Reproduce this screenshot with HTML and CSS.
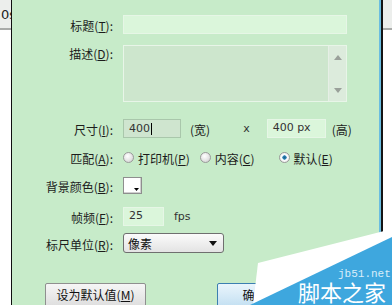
FILE: index.html
```html
<!DOCTYPE html>
<html>
<head>
<meta charset="utf-8">
<link rel="stylesheet" href="styles.css">
</head>
<body>
<div class="screen">
  <div class="side side-left"><div class="tab">0s</div></div>
  <div class="edge edge-dark"></div>
  <div class="dialog">
    <div class="row r1">
      <div class="lbl">标题(<u>T</u>):</div>
      <div class="field field-title"></div>
    </div>
    <div class="row r2">
      <div class="lbl lbl-top">描述(<u>D</u>):</div>
      <div class="area">
        <div class="scroll">
          <svg width="8" height="5" viewBox="0 0 8 5"><path d="M0 5 L4 0 L8 5 Z" fill="#9aa09a"/></svg>
          <svg width="8" height="5" viewBox="0 0 8 5"><path d="M0 0 L4 5 L8 0 Z" fill="#9aa09a"/></svg>
        </div>
      </div>
    </div>
    <div class="row r3">
      <div class="lbl">尺寸(<u>I</u>):</div>
      <div class="field field-w"><span>400</span><span class="caret"></span></div>
      <span class="unit unit-w">(宽)</span>
      <span class="times">x</span>
      <div class="field field-h">400 px</div>
      <span class="unit unit-h">(高)</span>
    </div>
    <div class="row r4">
      <div class="lbl">匹配(<u>A</u>):</div>
      <span class="radio"></span><span class="opt opt-p">打印机(<u>P</u>)</span>
      <span class="radio"></span><span class="opt opt-c">内容(<u>C</u>)</span>
      <span class="radio radio-on"></span><span class="opt">默认(<u>E</u>)</span>
    </div>
    <div class="row r5">
      <div class="lbl">背景颜色(<u>B</u>):</div>
      <div class="swatch">
        <svg class="swatch-arrow" width="5" height="3" viewBox="0 0 5 3"><path d="M0 0 L5 0 L2.5 3 Z" fill="#000"/></svg>
      </div>
    </div>
    <div class="row r6">
      <div class="lbl">帧频(<u>F</u>):</div>
      <div class="field field-fps">25</div>
      <span class="fps">fps</span>
    </div>
    <div class="row r7">
      <div class="lbl">标尺单位(<u>R</u>):</div>
      <div class="select">
        <span>像素</span>
        <svg width="8" height="5" viewBox="0 0 8 5"><path d="M0 0 L8 0 L4 5 Z" fill="#111"/></svg>
      </div>
    </div>
    <div class="buttons">
      <div class="btn btn-default">设为默认值(<u>M</u>)</div>
      <div class="btn btn-ok">确定</div>
    </div>
  </div>
  <div class="edge edge-blue"></div>
  <div class="edge edge-black"></div>
  <div class="side side-right"><div class="tab"></div></div>
  <svg class="wm" width="392" height="305" viewBox="0 0 392 305">
    <polygon points="392,229 258,263 253,305 392,305" fill="#ffffff"/>
    <polygon points="392,237 250,305 392,305" fill="#3ea7de"/>
    <text x="338" y="277" class="wm-url">jb51.net</text>
    <text x="298" y="301" class="wm-name">脚本之家</text>
  </svg>
</div>
</body>
</html>
```

FILE: styles.css
```css
* { box-sizing: border-box; }
html, body { margin: 0; padding: 0; }
body {
  width: 392px;
  height: 305px;
  overflow: hidden;
  font-family: "Noto Sans CJK SC", "DejaVu Sans", sans-serif;
  font-size: 12px;
  color: #1c1c1c;
}
u { text-decoration: underline; text-underline-offset: 1px; }

.screen {
  position: relative;
  display: flex;
  width: 392px;
  height: 305px;
  overflow: hidden;
}

.side {
  background: #ffffff;
  height: 305px;
}
.side-left { width: 11px; }
.side-right { width: 9px; }
.tab {
  height: 30px;
  background: #eceeec;
  border-bottom: 2px solid #a9aba9;
  font-family: "DejaVu Sans", sans-serif;
  font-size: 13px;
  line-height: 30px;
  color: #222;
  overflow: hidden;
  white-space: nowrap;
}
.side-left .tab { padding-left: 1px; }

.edge { height: 305px; }
.edge-dark { width: 1px; background: #101010; }
.edge-blue { width: 2px; background: #6bbde0; }
.edge-black { width: 2px; background: #141414; }

.dialog {
  width: 367px;
  background: #c7ebc9;
  padding-top: 15px;
  display: flex;
  flex-direction: column;
}

.row {
  display: flex;
  align-items: center;
  height: 19px;
}
.r2 { height: 57px; margin-top: 11px; align-items: flex-start; }
.r3 { margin-top: 17px; }
.r4 { margin-top: 10px; }
.r5 { margin-top: 9px; }
.r6 { margin-top: 12px; }
.r7 { margin-top: 7px; height: 20px; }

.lbl {
  width: 101px;
  margin-right: 10px;
  text-align: right;
  white-space: nowrap;
  line-height: 19px;
  padding-top: 2px;
}
.lbl-top { line-height: 16px; padding-top: 1px; }

.field {
  height: 19px;
  border: 1px solid #e6f6e6;
  background: #dbf6db;
  padding-left: 5px;
  line-height: 16px;
  font-family: "DejaVu Sans", sans-serif;
  font-size: 11px;
  color: #333;
}
.field-title { width: 224px; }
.field-w {
  width: 58px;
  background: #cfe5cf;
  border-color: #a9c7ab;
  display: flex;
  align-items: center;
}
.caret {
  display: inline-block;
  width: 1px;
  height: 12px;
  background: #000;
  margin-left: 1px;
}
.field-h { width: 59px; }
.field-fps { width: 41px; }

.unit { white-space: nowrap; padding-top: 1px; }
.unit-w { margin-left: 9px; }
.times {
  margin-left: 33px;
  font-family: "DejaVu Sans", sans-serif;
  font-size: 11px;
  color: #333;
}
.field-h { margin-left: 17px; }
.unit-h { margin-left: 6px; }

.area {
  width: 224px;
  height: 57px;
  border: 1px solid #e8f5e8;
  background: #cde6cd;
  display: flex;
  justify-content: flex-end;
}
.scroll {
  width: 18px;
  height: 100%;
  background: #dcebdc;
  border-left: 1px solid #e6efe6;
  display: flex;
  flex-direction: column;
  justify-content: space-between;
  align-items: center;
  padding: 9px 0 8px;
}

.radio {
  width: 11px;
  height: 11px;
  border-radius: 50%;
  border: 1px solid #9a9a9a;
  background: radial-gradient(circle at 40% 35%, #ffffff 0%, #e4e4e4 55%, #c8c8c8 100%);
  margin-right: 4px;
  flex: none;
}
.radio-on {
  background: radial-gradient(circle at 50% 50%, #1c5f8c 0%, #2e86b8 30%, #ffffff 38%, #e0e0e0 100%);
}
.opt { white-space: nowrap; padding-top: 1px; }
.opt-p { margin-right: 10px; }
.opt-c { margin-right: 24px; }

.swatch {
  position: relative;
  width: 19px;
  height: 17px;
  border: 1px solid #8e8e8e;
  background: #ffffff;
  box-shadow: inset -1px -1px 0 #d0d0d0;
}
.swatch-arrow { position: absolute; right: 2px; bottom: 2px; }

.fps {
  margin-left: 10px;
  font-family: "DejaVu Sans", sans-serif;
  font-size: 11px;
  color: #333;
}

.select {
  width: 101px;
  height: 20px;
  border: 1px solid #6f6f6f;
  border-radius: 3px;
  background: linear-gradient(#fbfbfb, #e3e3e3);
  display: flex;
  align-items: center;
  justify-content: space-between;
  padding: 0 6px 0 4px;
  font-size: 12px;
  color: #111;
}

.buttons {
  display: flex;
  margin-top: 30px;
  padding-left: 33px;
}
.btn {
  height: 24px;
  border: 1px solid #8f8f8f;
  border-radius: 2px;
  background: linear-gradient(#f6f6f6, #dedede);
  text-align: center;
  line-height: 22px;
  color: #111;
  white-space: nowrap;
}
.btn-default { width: 101px; }
.btn-ok {
  width: 75px;
  margin-left: 71px;
  background: linear-gradient(#eaf5fc, #c4e0f2);
  border-color: #3c7fb1;
}

.wm { position: absolute; left: 0; top: 0; }
.wm-url {
  font-family: "Liberation Mono", monospace;
  font-size: 11px;
  fill: #d8eefa;
}
.wm-name {
  font-family: "Noto Sans CJK SC", sans-serif;
  font-size: 22px;
  fill: #ffffff;
}
```
